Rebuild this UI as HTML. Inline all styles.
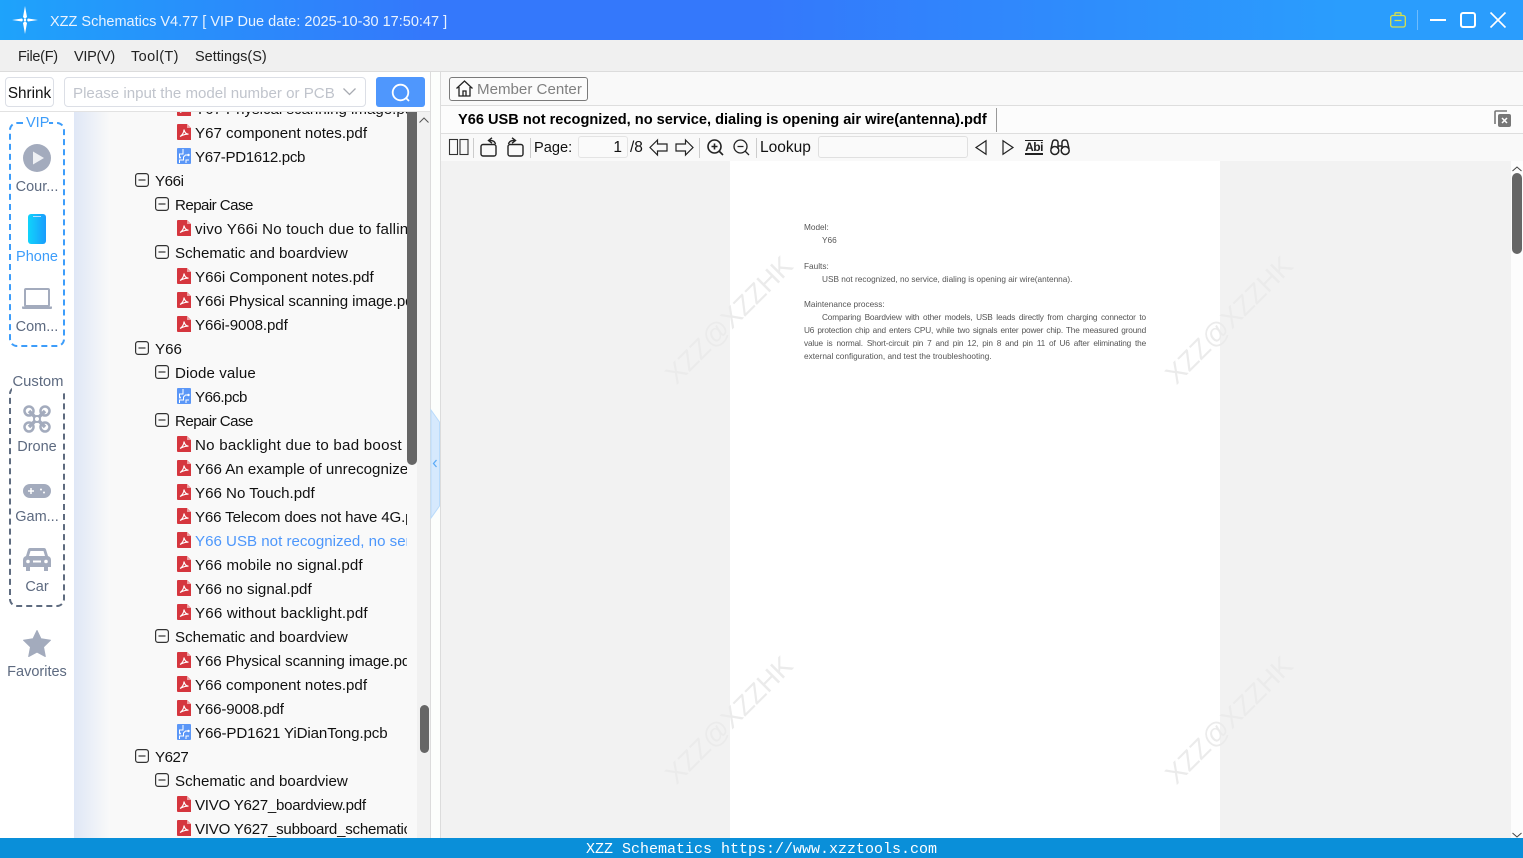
<!DOCTYPE html>
<html><head><meta charset="utf-8"><style>
*{box-sizing:border-box}
html,body{margin:0;padding:0;width:1523px;height:858px;overflow:hidden;background:#fff;font-family:"Liberation Sans","Noto Sans CJK SC",sans-serif;color:#111}
.a{position:absolute;white-space:nowrap}
.r{position:absolute;white-space:nowrap;font-size:15.1px;line-height:24px;height:24px;margin-top:2px}
.t svg[height="16"]{margin-top:-1px}
.s{color:#5d6a80;font-size:14.5px;text-align:center;width:74px;left:0;position:absolute;line-height:20px;margin-top:2px}
.m{position:absolute;font-size:14.5px;line-height:20px;top:47px;color:#222}
.p{position:absolute;font-size:8.25px;line-height:12px;color:#555;white-space:nowrap}
.j{width:342px;left:804px;text-align:justify;text-align-last:justify;white-space:normal;letter-spacing:-.16px}
.w{position:absolute;font-size:27px;color:#ebebeb;transform:rotate(-45deg);white-space:nowrap;width:220px;height:44px;line-height:44px;text-align:center}
svg{position:absolute;overflow:visible}
</style></head><body>
<svg width="0" height="0" style="position:absolute"><defs>
<symbol id="pdf" viewBox="0 0 14 16"><path d="M1 0H10L14 4V16H1Q0 16 0 15V1Q0 0 1 0Z" fill="#d5363e"/><path d="M10 0L14 4H10Z" fill="#eea0a4"/><path d="M3 12.5C5.500 11 7 8 7 5.500C7.500 8.500 9 10 11.500 10.200C9 10 6 10.700 3 12.500Z" fill="none" stroke="#fff" stroke-width="1.100"/></symbol>
<symbol id="pcb" viewBox="0 0 14 16"><rect width="14" height="16" rx="1" fill="#5b97f7"/><path d="M6 1V6H2.500V9M2.500 15V12H6.500V9L8.500 7H11M9 15V12H12" fill="none" stroke="#fff" stroke-width="1"/><circle cx="11.500" cy="7" r="1.200" fill="#fff"/><circle cx="3" cy="9.500" r="1" fill="#fff"/></symbol>
<symbol id="min" viewBox="0 0 14 14"><rect x=".6" y=".6" width="12.800" height="12.800" rx="2.500" fill="#fafafa" stroke="#333" stroke-width="1.200"/><path d="M3.500 7H10.500" stroke="#333" stroke-width="1.200"/></symbol>
</defs></svg>

<!-- Title bar -->
<div class="a" style="left:0;top:0;width:1523px;height:40px;background:linear-gradient(90deg,#1ea3fb 0,#3478fb 28%,#3478fb 50%,#2a9dfd 88%,#2a9dfd 100%)"></div>
<svg style="left:12px;top:6px" width="26" height="28" viewBox="0 0 26 28"><path d="M13 0L15 11L13 13L11 11ZM13 28L15 17L13 15L11 17ZM0 14L10 12.500L11 14L10 15.500ZM26 14L16 12.500L15 14L16 15.500Z" fill="#fff"/><circle cx="13" cy="14" r="1.200" fill="#fff"/></svg>
<div class="a" style="left:50px;top:12px;font-size:14.500px;line-height:20px;color:#e9f3ff">XZZ Schematics V4.77 [ VIP Due date: 2025-10-30 17:50:47 ]</div>
<svg style="left:1390px;top:12px" width="16" height="16" viewBox="0 0 16 16" fill="none" stroke="#d8e04a" stroke-width="1.300"><rect x=".7" y="3.500" width="14.600" height="11.500" rx="2"/><path d="M5 3.500V1.500Q5 .8 5.800 .8H10.200Q11 .8 11 1.500V3.500M4.500 8.500H11.500"/></svg>
<div class="a" style="left:1417px;top:10px;width:1px;height:20px;background:#6fbcfd"></div>
<div class="a" style="left:1430px;top:19px;width:16px;height:2px;background:#fff"></div>
<div class="a" style="left:1460px;top:12px;width:16px;height:16px;border:2px solid #fff;border-radius:3px"></div>
<svg style="left:1490px;top:12px" width="16" height="16" viewBox="0 0 16 16"><path d="M.5 .5L15.500 15.500M15.500 .5L.5 15.500" stroke="#fff" stroke-width="1.600"/></svg>

<!-- Menu -->
<div class="a" style="left:0;top:40px;width:1523px;height:32px;background:#f0f0f0;border-bottom:1px solid #dcdcdc"></div>
<div class="m" style="left:18px;letter-spacing:-.3px">File(F)</div><div class="m" style="left:74px;letter-spacing:-.3px">VIP(V)</div><div class="m" style="left:131px;letter-spacing:.4px">Tool(T)</div><div class="m" style="left:195px">Settings(S)</div>

<!-- Tree -->
<div class="a t" style="left:74px;top:112px;width:343px;height:726px;background:linear-gradient(90deg,#dfe7f6 0,#f9f9f9 36px);overflow:hidden">
<div class="a" style="left:0;top:0;width:333px;height:726px;overflow:hidden">
<svg style="left:103px;top:-11px" width="14" height="16"><use href="#pdf"/></svg><div class="r" style="left:121px;top:-16px">Y67 Physical scanning image.pdf</div>
<svg style="left:103px;top:13px" width="14" height="16"><use href="#pdf"/></svg><div class="r" style="left:121px;top:8px">Y67 component notes.pdf</div>
<svg style="left:103px;top:37px" width="14" height="16"><use href="#pcb"/></svg><div class="r" style="left:121px;top:32px;letter-spacing:-.35px">Y67-PD1612.pcb</div>
<svg style="left:61px;top:61px" width="14" height="14"><use href="#min"/></svg><div class="r" style="left:81px;top:56px;letter-spacing:-.4px">Y66i</div>
<svg style="left:81px;top:85px" width="14" height="14"><use href="#min"/></svg><div class="r" style="left:101px;top:80px;letter-spacing:-.55px">Repair Case</div>
<svg style="left:103px;top:109px" width="14" height="16"><use href="#pdf"/></svg><div class="r" style="left:121px;top:104px;letter-spacing:.2px">vivo Y66i No touch due to falling.pdf</div>
<svg style="left:81px;top:133px" width="14" height="14"><use href="#min"/></svg><div class="r" style="left:101px;top:128px">Schematic and boardview</div>
<svg style="left:103px;top:157px" width="14" height="16"><use href="#pdf"/></svg><div class="r" style="left:121px;top:152px">Y66i Component notes.pdf</div>
<svg style="left:103px;top:181px" width="14" height="16"><use href="#pdf"/></svg><div class="r" style="left:121px;top:176px;letter-spacing:-.1px">Y66i Physical scanning image.pdf</div>
<svg style="left:103px;top:205px" width="14" height="16"><use href="#pdf"/></svg><div class="r" style="left:121px;top:200px;letter-spacing:-.1px">Y66i-9008.pdf</div>
<svg style="left:61px;top:229px" width="14" height="14"><use href="#min"/></svg><div class="r" style="left:81px;top:224px">Y66</div>
<svg style="left:81px;top:253px" width="14" height="14"><use href="#min"/></svg><div class="r" style="left:101px;top:248px;letter-spacing:.1px">Diode value</div>
<svg style="left:103px;top:277px" width="14" height="16"><use href="#pcb"/></svg><div class="r" style="left:121px;top:272px;letter-spacing:-.5px">Y66.pcb</div>
<svg style="left:81px;top:301px" width="14" height="14"><use href="#min"/></svg><div class="r" style="left:101px;top:296px;letter-spacing:-.55px">Repair Case</div>
<svg style="left:103px;top:325px" width="14" height="16"><use href="#pdf"/></svg><div class="r" style="left:121px;top:320px;letter-spacing:.25px">No backlight due to bad boost</div>
<svg style="left:103px;top:349px" width="14" height="16"><use href="#pdf"/></svg><div class="r" style="left:121px;top:344px">Y66 An example of unrecognized USB</div>
<svg style="left:103px;top:373px" width="14" height="16"><use href="#pdf"/></svg><div class="r" style="left:121px;top:368px">Y66 No Touch.pdf</div>
<svg style="left:103px;top:397px" width="14" height="16"><use href="#pdf"/></svg><div class="r" style="left:121px;top:392px;letter-spacing:-.15px">Y66 Telecom does not have 4G.pdf</div>
<svg style="left:103px;top:421px" width="14" height="16"><use href="#pdf"/></svg><div class="r" style="left:121px;top:416px;color:#4d97fb">Y66 USB not recognized, no service</div>
<svg style="left:103px;top:445px" width="14" height="16"><use href="#pdf"/></svg><div class="r" style="left:121px;top:440px;letter-spacing:.1px">Y66 mobile no signal.pdf</div>
<svg style="left:103px;top:469px" width="14" height="16"><use href="#pdf"/></svg><div class="r" style="left:121px;top:464px">Y66 no signal.pdf</div>
<svg style="left:103px;top:493px" width="14" height="16"><use href="#pdf"/></svg><div class="r" style="left:121px;top:488px;letter-spacing:.2px">Y66 without backlight.pdf</div>
<svg style="left:81px;top:517px" width="14" height="14"><use href="#min"/></svg><div class="r" style="left:101px;top:512px">Schematic and boardview</div>
<svg style="left:103px;top:541px" width="14" height="16"><use href="#pdf"/></svg><div class="r" style="left:121px;top:536px;letter-spacing:-.1px">Y66 Physical scanning image.pdf</div>
<svg style="left:103px;top:565px" width="14" height="16"><use href="#pdf"/></svg><div class="r" style="left:121px;top:560px">Y66 component notes.pdf</div>
<svg style="left:103px;top:589px" width="14" height="16"><use href="#pdf"/></svg><div class="r" style="left:121px;top:584px;letter-spacing:-.15px">Y66-9008.pdf</div>
<svg style="left:103px;top:613px" width="14" height="16"><use href="#pcb"/></svg><div class="r" style="left:121px;top:608px;letter-spacing:-.12px">Y66-PD1621 YiDianTong.pcb</div>
<svg style="left:61px;top:637px" width="14" height="14"><use href="#min"/></svg><div class="r" style="left:81px;top:632px;letter-spacing:-.5px">Y627</div>
<svg style="left:81px;top:661px" width="14" height="14"><use href="#min"/></svg><div class="r" style="left:101px;top:656px">Schematic and boardview</div>
<svg style="left:103px;top:685px" width="14" height="16"><use href="#pdf"/></svg><div class="r" style="left:121px;top:680px;letter-spacing:-.26px">VIVO Y627_boardview.pdf</div>
<svg style="left:103px;top:709px" width="14" height="16"><use href="#pdf"/></svg><div class="r" style="left:121px;top:704px;letter-spacing:-.25px">VIVO Y627_subboard_schematic.pdf</div>
</div>
<div class="a" style="left:333px;top:0;width:10px;height:353px;background:#666;border-radius:0 0 5px 5px"></div>
</div>
<div class="a" style="left:417px;top:112px;width:13px;height:726px;background:#f1f1f1"></div>
<svg style="left:419px;top:117px" width="10" height="6"><path d="M.5 5.500L5 1L9.500 5.500" fill="none" stroke="#555"/></svg>
<div class="a" style="left:420px;top:705px;width:9px;height:48px;background:#666;border-radius:5px"></div>
<div class="a" style="left:430px;top:72px;width:11px;height:766px;background:#fcfefc;border-left:1px solid #dcdcdc;border-right:1px solid #dcdcdc"></div>
<svg style="left:431px;top:408px" width="9" height="112"><path d="M0 2L8.500 14V98L0 110Z" fill="#d6e9fd" stroke="#b9dbfb"/><path d="M5.500 52L2.500 55.500L5.500 59" fill="none" stroke="#5cabf7" stroke-width="1.300"/></svg>

<!-- Search row -->
<div class="a" style="left:0;top:72px;width:430px;height:40px;background:#fff;border-bottom:1px solid #e2e2e2"></div>
<div class="a" style="left:5px;top:77px;width:49px;height:30px;border:1px solid #dcdfe6;border-radius:4px;font-size:15.300px;line-height:31px;text-align:center;color:#111">Shrink</div>
<div class="a" style="left:64px;top:77px;width:302px;height:30px;border:1px solid #dcdfe6;border-radius:4px;background:#fff;font-size:15.100px;line-height:31px;padding-left:8px;color:#c0c4cc">Please input the model number or PCB</div>
<svg style="left:343px;top:88px" width="13" height="8"><path d="M.5 .5L6.500 6.500L12.500 .5" fill="none" stroke="#a8abb2" stroke-width="1.300"/></svg>
<div class="a" style="left:376px;top:77px;width:49px;height:30px;background:#4f97fd;border-radius:3px"></div>
<svg style="left:391px;top:83px" width="20" height="19" viewBox="0 0 20 19" fill="none" stroke="#fff" stroke-width="1.800"><circle cx="9.500" cy="9.500" r="7.800"/><path d="M15 15L18 18"/></svg>

<!-- Sidebar -->
<div class="a" style="left:0;top:112px;width:74px;height:726px;background:#fff"></div>
<div class="a" style="left:9px;top:122px;width:56px;height:225px;border:2px dashed #3d9dfa;border-radius:8px"></div>
<div class="a" style="left:26px;top:115px;width:23px;height:17px;background:#fff;text-align:center;font-size:14.500px;line-height:17px;color:#3d9dfa">VIP</div>
<svg style="left:23px;top:144px" width="28" height="28" viewBox="0 0 28 28"><circle cx="14" cy="14" r="14" fill="#a3abbd"/><path d="M10 7.500L21 14L10 20.500Z" fill="#eef0f4"/></svg>
<div class="s" style="top:175px">Cour...</div>
<div class="a" style="left:28px;top:214px;width:18px;height:30px;border-radius:3px;background:linear-gradient(90deg,#10d4fb,#1a9cfd)"></div>
<div class="a" style="left:33px;top:216px;width:8px;height:1px;background:#bdf"></div>
<div class="s" style="top:245px;color:#3d9dfa">Phone</div>
<svg style="left:22px;top:288px" width="30" height="22" viewBox="0 0 30 22"><rect x="3" y="1" width="24" height="17" rx="1" fill="#fff" stroke="#a3abbd" stroke-width="2"/><path d="M0 18.500H30V20Q30 21 29 21H1Q0 21 0 20Z" fill="#a3abbd"/></svg>
<div class="s" style="top:315px">Com...</div>
<div class="a" style="left:9px;top:386px;width:56px;height:221px;border:2px dashed #5e6b7f;border-radius:8px"></div>
<div class="a" style="left:12px;top:373px;width:52px;height:18px;background:#fff;text-align:center;font-size:14.800px;line-height:18px;color:#5d6a80">Custom</div>
<svg style="left:23px;top:405px" width="28" height="28" viewBox="0 0 28 28" fill="none" stroke="#a3abbd"><path d="M6 6L22 22M22 6L6 22" stroke-width="3.500"/><circle cx="6" cy="6" r="4.500" stroke-width="2.500"/><circle cx="22" cy="6" r="4.500" stroke-width="2.500"/><circle cx="6" cy="22" r="4.500" stroke-width="2.500"/><circle cx="22" cy="22" r="4.500" stroke-width="2.500"/><circle cx="14" cy="14" r="3" fill="#fff" stroke-width="2"/></svg>
<div class="s" style="top:435px">Drone</div>
<svg style="left:23px;top:484px" width="28" height="14" viewBox="0 0 28 14"><rect width="28" height="14" rx="7" fill="#a3abbd"/><path d="M5 7H11M8 4V10" stroke="#fff" stroke-width="1.500"/><circle cx="18" cy="5.500" r="1" fill="#fff"/><circle cx="21" cy="8.500" r="1" fill="#fff"/></svg>
<div class="s" style="top:505px">Gam...</div>
<svg style="left:23px;top:548px" width="28" height="23" viewBox="0 0 28 23"><path d="M5 1.500Q5.500 0 7 0H21Q22.500 0 23 1.500L25 8Q28 9 28 12V19H25V23H21V19H7V23H3V19H0V12Q0 9 3 8ZM7.500 3L6 8H22L20.500 3Z" fill="#a3abbd" fill-rule="evenodd"/><circle cx="5" cy="13.500" r="1.800" fill="#fff"/><circle cx="23" cy="13.500" r="1.800" fill="#fff"/><rect x="10" y="12.500" width="8" height="2" fill="#fff"/></svg>
<div class="s" style="top:575px">Car</div>
<svg style="left:23px;top:630px" width="28" height="27" viewBox="0 0 28 27"><path d="M14 0.500L18 8.800L27.500 10.200L20.500 17L22.300 26.500L14 22L5.700 26.500L7.500 17L.5 10.200L10 8.800Z" fill="#a3abbd" stroke="#a3abbd" stroke-linejoin="round"/></svg>
<div class="s" style="top:660px">Favorites</div>

<!-- Right header -->
<div class="a" style="left:441px;top:72px;width:1082px;height:34px;background:#f9f9f9;border-bottom:1px solid #dedede"></div>
<div class="a" style="left:449px;top:77px;width:139px;height:24px;border:1px solid #7a7a7a;border-radius:3px;background:#fbfbfb;font-size:15.100px;line-height:23px;padding-left:27px;color:#808080">Member Center</div>
<svg style="left:456px;top:80px" width="17" height="17" viewBox="0 0 17 17" fill="none" stroke="#222" stroke-width="1.300"><path d="M.5 8.500L8.500 1L16.500 8.500M3 7V16H14V7M7 16V11H10V16"/></svg>
<div class="a" style="left:441px;top:106px;width:1082px;height:28px;background:#fcfcfc;border-bottom:1px solid #dedede"></div>
<div class="a" style="left:458px;top:110px;font-size:14.600px;line-height:20px;font-weight:bold;color:#000">Y66 USB not recognized, no service, dialing is opening air wire(antenna).pdf</div>
<div class="a" style="left:996px;top:108px;width:1px;height:24px;background:#999"></div>
<svg style="left:1494px;top:110px" width="18" height="18" viewBox="0 0 18 18"><path d="M1 14V2Q1 1 2 1H13" fill="none" stroke="#777" stroke-width="1.600"/><rect x="4" y="4" width="13" height="13" rx="2" fill="#777"/><path d="M8 8L13 13M13 8L8 13" stroke="#fff" stroke-width="1.500"/></svg>

<!-- Toolbar -->
<div class="a" style="left:441px;top:134px;width:1082px;height:27px;background:#f9f9f9"></div>
<svg style="left:449px;top:139px" width="20" height="17" fill="none" stroke="#333" stroke-width="1.100"><rect x=".5" y=".5" width="8" height="15"/><rect x="11" y=".5" width="8" height="15"/></svg>
<div class="a" style="left:473px;top:138px;width:1px;height:20px;background:#ccc"></div>
<svg style="left:480px;top:137px" width="18" height="20" viewBox="0 0 18 20" fill="none" stroke="#222" stroke-width="1.400"><rect x="1" y="7.500" width="15" height="11.500" rx="2"/><path d="M15.500 7Q14.500 3 9 3.500M12 .8L8.500 3.500L12 6.200"/></svg>
<svg style="left:506px;top:137px" width="18" height="20" viewBox="0 0 18 20" fill="none" stroke="#222" stroke-width="1.400"><rect x="2" y="7.500" width="15" height="11.500" rx="2"/><path d="M2.500 7Q3.500 3 9 3.500M6 .8L9.500 3.500L6 6.200"/></svg>
<div class="a" style="left:530px;top:138px;width:1px;height:20px;background:#ccc"></div>
<div class="a" style="left:534px;top:138px;font-size:14.600px;line-height:20px">Page:</div>
<div class="a" style="left:578px;top:136px;width:50px;height:22px;border:1px solid #e4e4e4;background:#fafafa;border-radius:3px;font-size:15.500px;line-height:22px;text-align:right;padding-right:5px">1</div>
<div class="a" style="left:630px;top:138px;font-size:15.500px;line-height:20px">/8</div>
<svg style="left:649px;top:139px" width="19" height="17" viewBox="0 0 19 17"><path d="M8.500 1L1 8.500L8.500 16V12H18V5H8.500Z" fill="none" stroke="#222" stroke-width="1.200"/></svg>
<svg style="left:675px;top:139px" width="19" height="17" viewBox="0 0 19 17"><path d="M10.500 1L18 8.500L10.500 16V12H1V5H10.500Z" fill="none" stroke="#222" stroke-width="1.200"/></svg>
<div class="a" style="left:699px;top:138px;width:1px;height:20px;background:#ccc"></div>
<svg style="left:707px;top:139px" width="17" height="17" viewBox="0 0 17 17" fill="none" stroke="#222" stroke-width="1.600"><circle cx="7.500" cy="7.500" r="6.500"/><path d="M12 12L16 16M4.500 7.500H10.500M7.500 4.500V10.500"/></svg>
<svg style="left:733px;top:139px" width="17" height="17" viewBox="0 0 17 17" fill="none" stroke="#222" stroke-width="1.300"><circle cx="7.500" cy="7.500" r="6.500"/><path d="M12 12L16 16M4.500 7.500H10.500"/></svg>
<div class="a" style="left:756px;top:138px;width:1px;height:20px;background:#ccc"></div>
<div class="a" style="left:760px;top:138px;font-size:15.500px;line-height:20px">Lookup</div>
<div class="a" style="left:818px;top:136px;width:150px;height:22px;border:1px solid #e0e0e0;background:#fafafa;border-radius:3px"></div>
<svg style="left:975px;top:140px" width="12" height="15"><path d="M11 .7V14.300L1 7.500Z" fill="none" stroke="#222" stroke-width="1.200"/></svg>
<svg style="left:1002px;top:140px" width="12" height="15"><path d="M1 .7V14.300L11 7.500Z" fill="none" stroke="#222" stroke-width="1.200"/></svg>
<div class="a" style="left:1025px;top:140px;width:18px;height:15px;border-top:1px solid #222;border-bottom:2px solid #222;font-size:12px;line-height:13px;font-weight:bold;text-align:center;letter-spacing:-.5px;color:#222">Abi</div>
<svg style="left:1050px;top:139px" width="20" height="17" viewBox="0 0 20 17" fill="none" stroke="#222" stroke-width="1.500"><circle cx="4.800" cy="11.500" r="4"/><circle cx="15.200" cy="11.500" r="4"/><path d="M1 10L2.500 3Q3 1 5 1Q7.500 1 8 3V10M19 10L17.500 3Q17 1 15 1Q12.500 1 12 3V10M8 7H12"/></svg>

<!-- Document -->
<div class="a" style="left:441px;top:161px;width:1070px;height:677px;background:#f2f2f2;overflow:hidden">
<div class="a" style="left:289px;top:0;width:490px;height:677px;background:#fff"></div>
<div class="w" style="left:178px;top:137px">XZZ@XZZHK</div>
<div class="w" style="left:678px;top:137px">XZZ@XZZHK</div>
<div class="w" style="left:178px;top:537px">XZZ@XZZHK</div>
<div class="w" style="left:678px;top:537px">XZZ@XZZHK</div>
</div>
<div class="p" style="left:804px;top:222px">Model:</div>
<div class="p" style="left:822px;top:235px">Y66</div>
<div class="p" style="left:804px;top:261px">Faults:</div>
<div class="p" style="left:822px;top:274px">USB not recognized, no service, dialing is opening air wire(antenna).</div>
<div class="p" style="left:804px;top:299px">Maintenance process:</div>
<div class="p j" style="top:312px;padding-left:18px">Comparing Boardview with other models, USB leads directly from charging connector to</div>
<div class="p j" style="top:325px">U6 protection chip and enters CPU, while two signals enter power chip. The measured ground</div>
<div class="p j" style="top:338px">value is normal. Short-circuit pin 7 and pin 12, pin 8 and pin 11 of U6 after eliminating the</div>
<div class="p" style="left:804px;top:351px">external configuration, and test the troubleshooting.</div>

<!-- Right scrollbar -->
<div class="a" style="left:1511px;top:161px;width:12px;height:677px;background:#fdfdfd"></div>
<svg style="left:1512px;top:166px" width="10" height="6"><path d="M.5 5L5 1L9.500 5" fill="none" stroke="#444"/></svg>
<div class="a" style="left:1512px;top:173px;width:10px;height:81px;background:#666;border-radius:5px"></div>
<svg style="left:1512px;top:832px" width="10" height="6"><path d="M.5 1L5 5L9.500 1" fill="none" stroke="#444"/></svg>

<!-- Footer -->
<div class="a" style="left:0;top:838px;width:1523px;height:20px;background:#0a8fd9;color:#fff;font-family:'Liberation Mono',monospace;font-size:15px;line-height:23px;text-align:center;overflow:hidden">XZZ Schematics https://www.xzztools.com</div>
</body></html>
